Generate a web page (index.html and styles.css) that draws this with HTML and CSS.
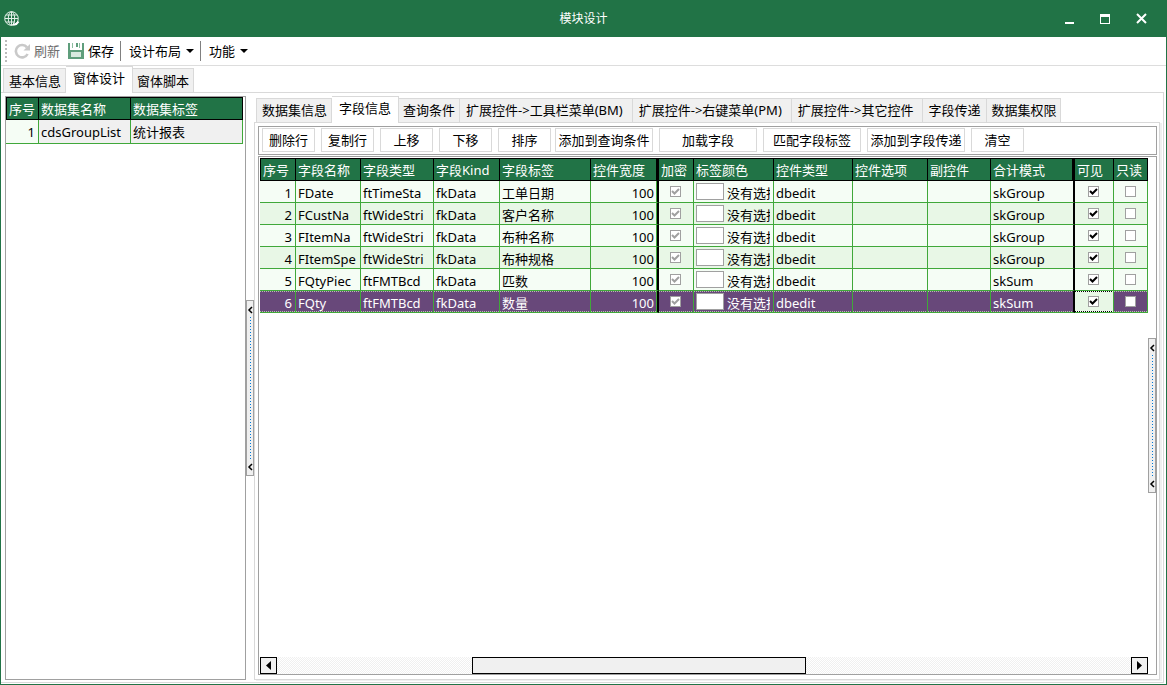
FILE: index.html
```html
<!DOCTYPE html>
<html lang="zh-CN">
<head>
<meta charset="utf-8">
<title>模块设计</title>
<link rel="stylesheet" href="styles.css">
</head>
<body>
<div class="window">
  <header class="titlebar">
    <svg class="logo" viewBox="0 0 16 16" aria-hidden="true">
      <circle cx="7.5" cy="7.500" r="6.800"/>
      <ellipse cx="7.5" cy="7.500" rx="3.2" ry="6.800"/>
      <path d="M7.5 1v13M1 7.500h13M2 4h11M2 11h9"/>
      <path class="logo-mark" d="M9 13c2 1 4 0 5.500-2.500"/>
    </svg>
    <h1 class="caption">模块设计</h1>
    <div class="window-controls">
      <button type="button" class="control" aria-label="最小化"><svg viewBox="0 0 12 12"><path d="M2 9h9v2H2z"/></svg></button>
      <button type="button" class="control" aria-label="最大化"><svg viewBox="0 0 12 12"><path fill-rule="evenodd" d="M1 1h10v10H1zM2 4v6h8V4z"/></svg></button>
      <button type="button" class="control" aria-label="关闭"><svg viewBox="0 0 12 12"><path class="cross" d="M2 1l9 9M11 1l-9 9"/></svg></button>
    </div>
  </header>

  <nav class="toolbar">
    <span class="grip"></span>
    <button type="button" class="tool" disabled>
      <svg class="tool-icon" viewBox="0 0 16 16"><path fill="none" stroke="#c9c9c9" stroke-width="2.6" d="M13 4.400A6.200 6.200 0 1 0 13.600 11"/><path fill="#c9c9c9" d="M16 1v6.500h-6.500z"/></svg>
      刷新
    </button>
    <button type="button" class="tool">
      <svg class="tool-icon" viewBox="0 0 16 16"><path fill="#5f9e7c" d="M0 0h2v7h12V0h2v16H0z"/><path fill="#8bbd9f" d="M4 0h1v5H4zM11 0h1v5h-1z"/><path fill="#d8eadf" d="M3 9h10v5H3z"/><path fill="#5f9e7c" d="M8 0h2v4H8z"/></svg>
      保存
    </button>
    <span class="separator"></span>
    <button type="button" class="tool menu">设计布局<span class="caret"></span></button>
    <span class="separator"></span>
    <button type="button" class="tool menu">功能<span class="caret"></span></button>
  </nav>

  <div class="tabs main-tabs">
    <button type="button" class="tab">基本信息</button>
    <button type="button" class="tab active">窗体设计</button>
    <button type="button" class="tab">窗体脚本</button>
  </div>

  <main class="page">
    <section class="datasets">
      <table class="grid dataset-grid">
        <colgroup><col class="c33"><col class="c92"><col class="c112"></colgroup>
        <thead><tr><th>序号</th><th>数据集名称</th><th>数据集标签</th></tr></thead>
        <tbody><tr><td class="num">1</td><td class="fixed">cdsGroupList</td><td class="fixed">统计报表</td></tr></tbody>
      </table>
    </section>

    <div class="splitter">
      <button type="button" class="split-handle" aria-label="收起数据集">
        <svg viewBox="0 0 6 8"><path d="M5 1L2 4l3 3"/></svg><span class="dots"></span><svg viewBox="0 0 6 8"><path d="M5 1L2 4l3 3"/></svg>
      </button>
    </div>

    <section class="detail">
      <div class="tabs detail-tabs">
        <button type="button" class="tab">数据集信息</button>
        <button type="button" class="tab active">字段信息</button>
        <button type="button" class="tab">查询条件</button>
        <button type="button" class="tab long">扩展控件-&gt;工具栏菜单(BM)</button>
        <button type="button" class="tab long">扩展控件-&gt;右键菜单(PM)</button>
        <button type="button" class="tab long">扩展控件-&gt;其它控件</button>
        <button type="button" class="tab">字段传递</button>
        <button type="button" class="tab">数据集权限</button>
      </div>
      <div class="detail-pane">
        <div class="actions">
          <div class="action-group">
            <button type="button" class="action">删除行</button>
            <button type="button" class="action">复制行</button>
            <button type="button" class="action">上移</button>
            <button type="button" class="action">下移</button>
            <button type="button" class="action">排序</button>
          </div>
          <div class="action-group">
            <button type="button" class="action wide">添加到查询条件</button>
            <button type="button" class="action wide">加载字段</button>
            <button type="button" class="action wide">匹配字段标签</button>
            <button type="button" class="action wide">添加到字段传递</button>
            <button type="button" class="action">清空</button>
          </div>
        </div>
        <div class="fields">
          <div class="fields-body">
            <table class="grid field-grid">
              <colgroup><col class="c36"><col class="c65"><col class="c73"><col class="c66"><col class="c91"><col class="c68"><col class="c35"><col class="c80"><col class="c79"><col class="c75"><col class="c63"><col class="c84"><col class="c39"><col class="c34"></colgroup>
              <thead><tr><th>序号</th><th>字段名称</th><th>字段类型</th><th>字段Kind</th><th>字段标签</th><th class="split">控件宽度</th><th>加密</th><th>标签颜色</th><th>控件类型</th><th>控件选项</th><th>副控件</th><th class="split">合计模式</th><th>可见</th><th>只读</th></tr></thead>
              <tbody id="field-rows"></tbody>
            </table>
            <div class="scrollbar">
              <button type="button" class="scroll-arrow" aria-label="向左滚动"><svg viewBox="0 0 15 15"><path d="M10 3v9L5 7.500z"/></svg></button>
              <div class="track"><div class="thumb"></div></div>
              <button type="button" class="scroll-arrow" aria-label="向右滚动"><svg viewBox="0 0 15 15"><path d="M5 3v9l5-4.500z"/></svg></button>
            </div>
          </div>
          <button type="button" class="split-handle short" aria-label="展开属性">
            <svg viewBox="0 0 6 8"><path d="M5 1L2 4l3 3"/></svg><span class="dots"></span><svg viewBox="0 0 6 8"><path d="M5 1L2 4l3 3"/></svg>
          </button>
        </div>
      </div>
    </section>
  </main>
</div>
<script src="fields.js"></script>
</body>
</html>
```
FILE: styles.css
```css
* { box-sizing: border-box; }

body {
  margin: 0;
  font: 13px/18px "Noto Sans", "Noto Sans CJK SC", sans-serif;
  color: #000;
}

button {
  margin: 0;
  padding: 0;
  border: 0;
  border-radius: 0;
  background: none;
  color: inherit;
  font: inherit;
  white-space: nowrap;
}

svg { display: block; }

.window {
  display: flex;
  flex-direction: column;
  height: 100vh;
  border: 1px solid #217346;
  border-top: 0;
  background: #fff;
}

/* Title bar */
.titlebar {
  display: grid;
  grid-template-columns: 1fr auto 1fr;
  align-items: center;
  flex: none;
  height: 37px;
  padding: 0 19px 0 3px;
  background: #217346;
  color: #fff;
}
.logo {
  width: 16px;
  height: 16px;
  fill: none;
  stroke: #e3efe8;
}
.logo-mark { stroke: #fff; stroke-width: 2; }
.caption {
  margin: 0;
  padding-left: 16px;
  font-size: 12px;
  font-weight: 400;
}
.window-controls {
  display: flex;
  justify-content: flex-end;
  gap: 24px;
}
.control { width: 12px; height: 12px; }
.control svg { width: 12px; height: 12px; fill: #fff; }
.cross { stroke: #fff; stroke-width: 2; }

/* Toolbar */
.toolbar {
  display: flex;
  align-items: center;
  flex: none;
  height: 29px;
  padding-left: 4px;
  border-bottom: 1px solid #ddd;
}
.grip {
  width: 2px;
  height: 22px;
  margin-right: 7px;
  background: repeating-linear-gradient(#bbb 0 2px, #fff 2px 4px);
}
.tool {
  display: flex;
  align-items: center;
  gap: 4px;
  margin-right: 8px;
}
.tool:disabled { color: #6d6d6d; }
.tool-icon { width: 16px; height: 16px; }
.separator {
  width: 1px;
  height: 20px;
  margin-right: 8px;
  background: #808080;
}
.tool + .separator { margin-left: -2px; }
.menu { gap: 5px; }
.caret {
  border: 4px solid transparent;
  border-top-color: #000;
  border-bottom: 0;
}

/* Tabs */
.tabs {
  display: flex;
  align-items: flex-end;
  flex: none;
  padding-left: 2px;
}
.tab {
  height: 24px;
  padding: 0 4px;
  border: 1px solid #d9d9d9;
  border-left-width: 0;
  border-bottom: 0;
  background: #f0f0f0;
}
.tab:first-child { padding-left: 5px; border-left-width: 1px; }
.tab.long { padding: 0 9px 0 6px; }
.tab.active {
  z-index: 1;
  height: 27px;
  margin-bottom: -1px;
  padding: 0 7px 4px;
  background: #fff;
}
.detail-tabs .tab { padding-bottom: 1px; }
.detail-tabs .tab.long { padding-bottom: 1px; }
.detail-tabs .tab.active { padding-bottom: 5px; }
.tab.long + .tab:not(.long) { padding-right: 6px; padding-left: 5px; }

/* Page */
.page {
  display: flex;
  flex: 1;
  min-height: 0;
  margin: 0 2px 1px 0;
  padding: 3px 3px 2px 4px;
  border: solid #d9d9d9;
  border-width: 1px 1px 1px 0;
}
.datasets {
  flex: none;
  width: 241px;
  border: 1px solid #a0a0a0;
}
.splitter {
  display: flex;
  align-items: center;
  flex: none;
}
.split-handle {
  display: flex;
  flex-direction: column;
  align-items: center;
  justify-content: space-between;
  flex: none;
  width: 8px;
  height: 176px;
  padding: 5px 0 4px;
  border: 1px solid #a0a0a0;
  background: #f0f0f0;
}
.split-handle.short { height: 155px; }
.split-handle svg {
  width: 6px;
  height: 8px;
  fill: none;
  stroke: #000;
  stroke-width: 1.5;
}
.dots {
  flex: 1;
  width: 1px;
  margin: 3px 0;
  background: repeating-linear-gradient(#0078d7 0 1px, #f0f0f0 1px 3px);
}
.detail {
  display: flex;
  flex-direction: column;
  flex: 1;
  min-width: 0;
}
.detail-pane {
  display: flex;
  flex-direction: column;
  flex: 1;
  min-height: 0;
  gap: 1px;
  padding: 3px 2px 4px 3px;
  border: 1px solid #d9d9d9;
  box-shadow: 2px 1px 0 #f0f0f0;
}
.actions {
  display: flex;
  align-items: center;
  flex: none;
  gap: 4px;
  height: 29px;
  padding: 0 3px 1px;
  border: 1px solid #a0a0a0;
}
.action-group { display: flex; gap: 6px; }
.action {
  width: 53px;
  height: 24px;
  border: 1px solid #d9d9d9;
  background: #fff;
}
.action.wide { width: 98px; }

/* Data grids */
.grid {
  border-collapse: separate;
  border-spacing: 0;
  table-layout: fixed;
  white-space: nowrap;
}
.dataset-grid { width: 237px; }
.field-grid { width: 888px; }
.grid th {
  height: 23px;
  padding: 0 0 0 2px;
  border: solid #000;
  border-width: 1px 1px 1px 0;
  background: #217346;
  color: #fff;
  font-weight: 400;
  text-align: left;
}
.grid th:first-child { border-left-width: 1px; }
.grid td {
  height: 22px;
  padding: 2px 0 0 2px;
  border: solid #40a83a;
  border-width: 0 1px 1px 0;
  background: #f5fdf5;
  overflow: hidden;
}
.dataset-grid td { height: 24px; padding-top: 0; }
.grid td.fixed { background: #f0f0f0; }
.grid tr.even td { background: #e8f7e6; }
.grid td.num { padding-right: 3px; padding-left: 0; text-align: right; }
.grid th.split { border-right: 3px solid #000; }
.grid td.split { border-right: 2px solid #000; }
.grid td.num.split { box-shadow: inset -1px 0 0 #40a83a; }
.grid td.check { padding: 2px 1px 0 0; }
.grid tr.selected td {
  background:
    repeating-linear-gradient(90deg, #b9c4b0 0 1px, #68487a 1px 2px) top / 100% 1px no-repeat,
    repeating-linear-gradient(90deg, #b9c4b0 0 1px, #68487a 1px 2px) bottom / 100% 1px no-repeat,
    #68487a;
  color: #fff;
}
.grid tr.selected td.focused {
  background:
    repeating-linear-gradient(90deg, #000 0 1px, #fff 1px 2px) top / 100% 1px no-repeat,
    repeating-linear-gradient(90deg, #000 0 1px, #fff 1px 2px) bottom / 100% 1px no-repeat,
    #e8f7e6;
}
.tick {
  appearance: none;
  display: block;
  width: 11px;
  height: 11px;
  margin: 0 auto 3px;
  border: 1px solid #a0a0a0;
  background: #fff;
}
.tick:checked {
  background: #fff url("data:image/svg+xml,%3Csvg xmlns='http://www.w3.org/2000/svg' viewBox='0 0 9 9'%3E%3Cpath d='M1 4l2.500 2.500L8 2' fill='none' stroke='%23000' stroke-width='2'/%3E%3C/svg%3E") center / 9px 9px no-repeat;
}
.tick:disabled { opacity: 1; }
.tick:disabled:checked {
  background-image: url("data:image/svg+xml,%3Csvg xmlns='http://www.w3.org/2000/svg' viewBox='0 0 9 9'%3E%3Cpath d='M1 4l2.500 2.500L8 2' fill='none' stroke='%23a0a0a0' stroke-width='2'/%3E%3C/svg%3E");
}
.color {
  display: flex;
  align-items: center;
  gap: 3px;
  width: 74px;
  overflow: hidden;
}
.swatch {
  flex: none;
  width: 28px;
  height: 17px;
  margin-bottom: 2px;
  border: 1px solid #a0a0a0;
  background: #fff;
}
.c33 { width: 33px; }
.c34 { width: 34px; }
.c35 { width: 35px; }
.c36 { width: 36px; }
.c39 { width: 39px; }
.c63 { width: 63px; }
.c65 { width: 65px; }
.c66 { width: 66px; }
.c68 { width: 68px; }
.c73 { width: 73px; }
.c75 { width: 75px; }
.c79 { width: 79px; }
.c80 { width: 80px; }
.c84 { width: 84px; }
.c91 { width: 91px; }
.c92 { width: 92px; }
.c112 { width: 112px; }

/* Field grid panel */
.fields {
  display: flex;
  align-items: center;
  flex: 1;
  min-height: 0;
  padding-left: 1px;
  border: 1px solid #a0a0a0;
}
.fields-body {
  display: flex;
  flex-direction: column;
  justify-content: space-between;
  align-self: stretch;
  flex: 1;
  min-width: 0;
  padding-top: 1px;
  overflow: hidden;
}
.scrollbar { display: flex; height: 17px; }
.scroll-arrow {
  width: 17px;
  height: 17px;
  border: 1px solid #000;
  background: #f0f0f0;
}
.scroll-arrow svg { width: 15px; height: 15px; }
.track {
  flex: 1;
  padding-left: 195px;
  background: repeating-conic-gradient(#f0f0f0 0 25%, #fff 0 50%) 0 0 / 2px 2px;
}
.thumb {
  width: 334px;
  height: 17px;
  border: 1px solid #000;
  background: #f0f0f0;
}
```
FILE: fields.js
```js
const fields = [
  ["FDate", "ftTimeSta", "工单日期", "skGroup"],
  ["FCustNa", "ftWideStri", "客户名称", "skGroup"],
  ["FItemNa", "ftWideStri", "布种名称", "skGroup"],
  ["FItemSpe", "ftWideStri", "布种规格", "skGroup"],
  ["FQtyPiec", "ftFMTBcd", "匹数", "skSum"],
  ["FQty", "ftFMTBcd", "数量", "skSum"]
];

document.getElementById("field-rows").innerHTML = fields.map(([name, type, label, mode], i) => {
  const last = i === fields.length - 1;
  const state = last ? "selected" : i % 2 ? "even" : "";
  return `<tr class="${state}">
    <td class="num">${i + 1}</td><td>${name}</td><td>${type}</td><td>fkData</td><td>${label}</td>
    <td class="num split">100</td>
    <td class="check"><input type="checkbox" class="tick" aria-label="加密" checked disabled></td>
    <td><div class="color"><span class="swatch"></span>没有选择</div></td>
    <td>dbedit</td><td></td><td></td><td class="split">${mode}</td>
    <td class="check${last ? " focused" : ""}"><input type="checkbox" class="tick" aria-label="可见" checked></td>
    <td class="check"><input type="checkbox" class="tick" aria-label="只读"></td>
  </tr>`;
}).join("");
```
